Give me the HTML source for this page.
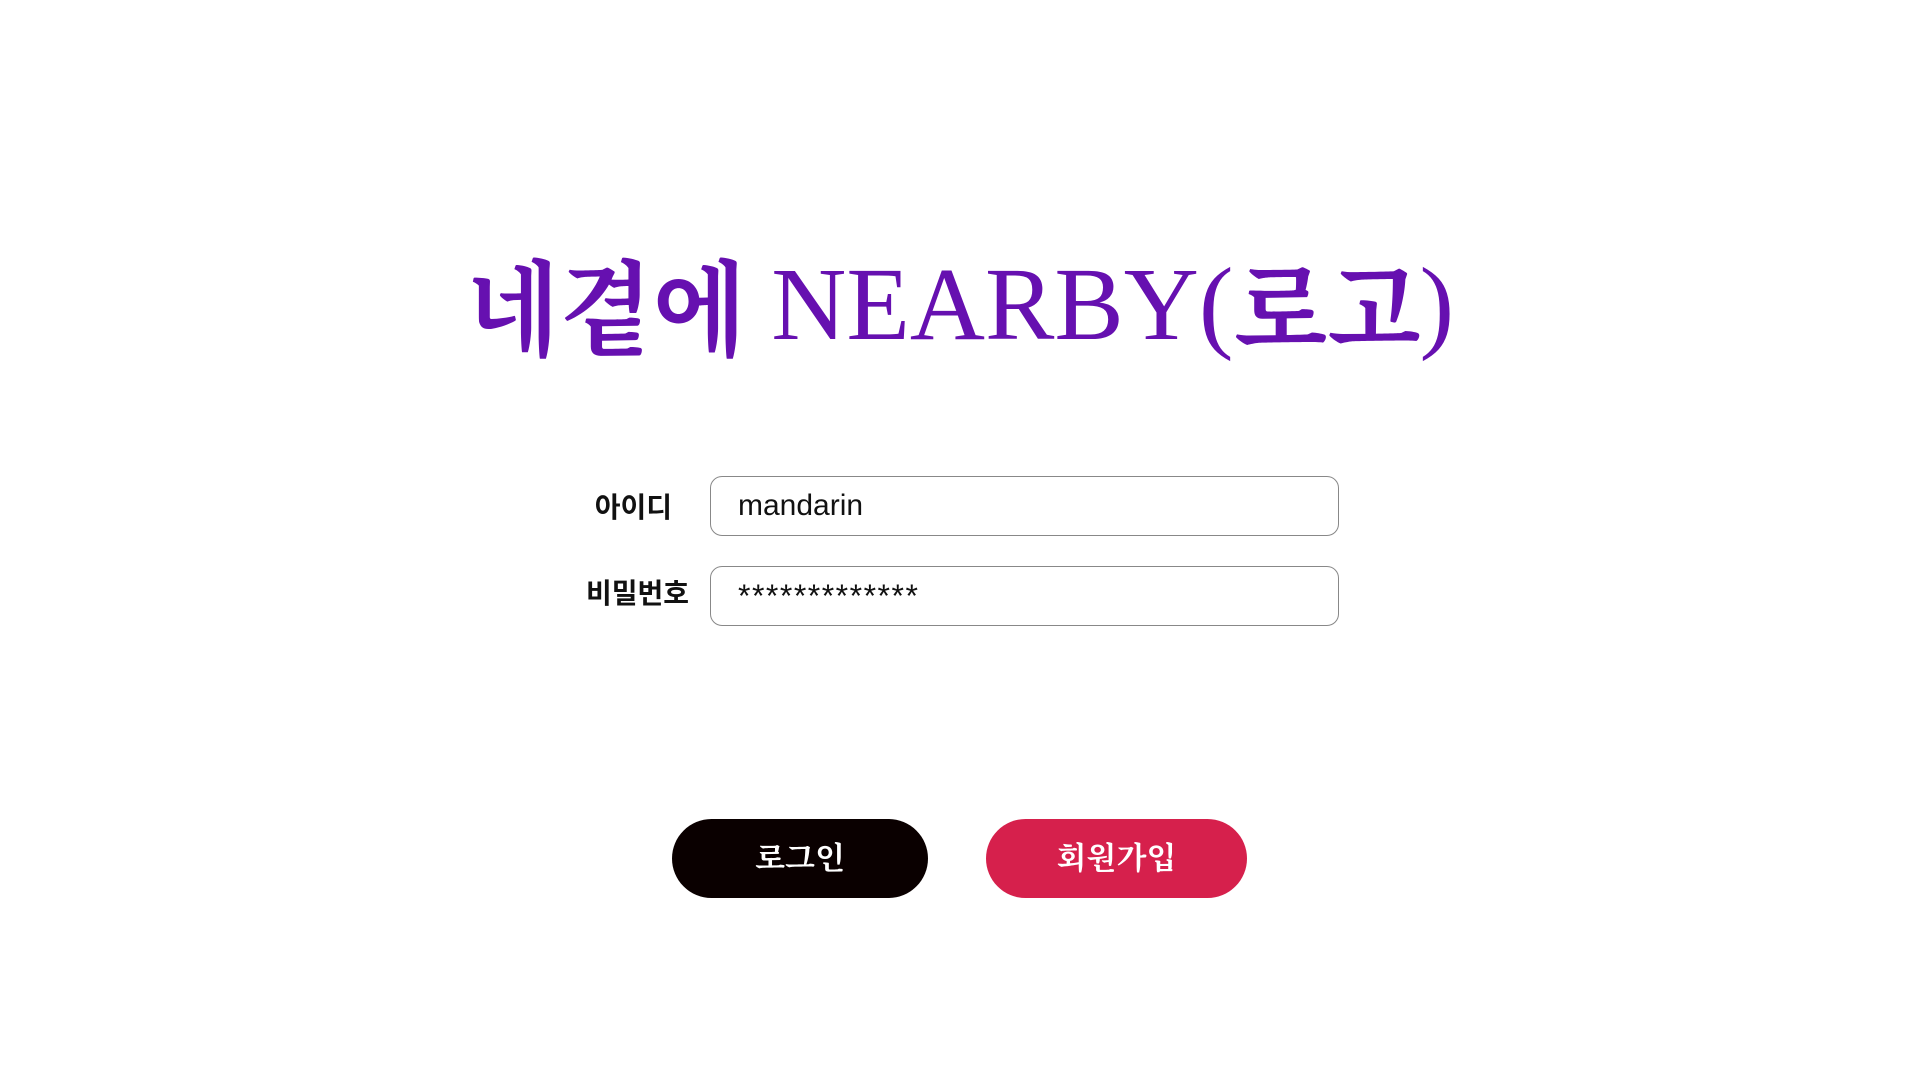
<!DOCTYPE html>
<html><head><meta charset="utf-8"><style>
html,body{margin:0;padding:0;background:#fff;width:1920px;height:1080px;overflow:hidden}
.title{position:absolute;left:0;width:1920px;top:240px;text-align:center;font-family:"Liberation Serif","Noto Serif CJK KR",serif;font-size:104px;line-height:130px;color:#6610b0;font-weight:400;white-space:nowrap}
.title .h{display:inline-block;font-weight:700;transform:scaleX(0.93);transform-origin:left center;position:relative;top:8px}
.lbl{position:absolute;font-family:"Liberation Sans","Noto Sans CJK KR",sans-serif;font-weight:700;font-size:28px;color:#111;text-align:right;width:200px}
.inp{position:absolute;left:710px;width:629px;height:60px;border:1px solid #888;border-radius:12px;box-sizing:border-box;font-family:"Liberation Sans","Noto Sans CJK KR",sans-serif;color:#111;padding-left:27px}
.btn{position:absolute;top:819px;height:79px;border-radius:40px;color:#fff;font-family:"Liberation Serif","Noto Serif CJK KR",serif;font-size:31px;font-weight:700;text-align:center;line-height:79px}
</style></head><body>
<div class="title"><span class="h" style="margin-right:-22px">네곁에</span> NEARBY(<span class="h" style="margin-right:-15px">로고</span>)</div>
<div class="lbl" style="left:472px;top:486px">아이디</div>
<div class="lbl" style="left:489px;top:572px">비밀번호</div>
<div class="inp" style="top:476px;font-size:30px;line-height:58px">mandarin</div>
<div class="inp" style="top:566px;font-size:32px;line-height:58px;letter-spacing:1.5px">*************</div>
<div class="btn" style="left:672px;width:256px;background:#0a0000">로그인</div>
<div class="btn" style="left:986px;width:261px;background:#d6204c">회원가입</div>
</body></html>
